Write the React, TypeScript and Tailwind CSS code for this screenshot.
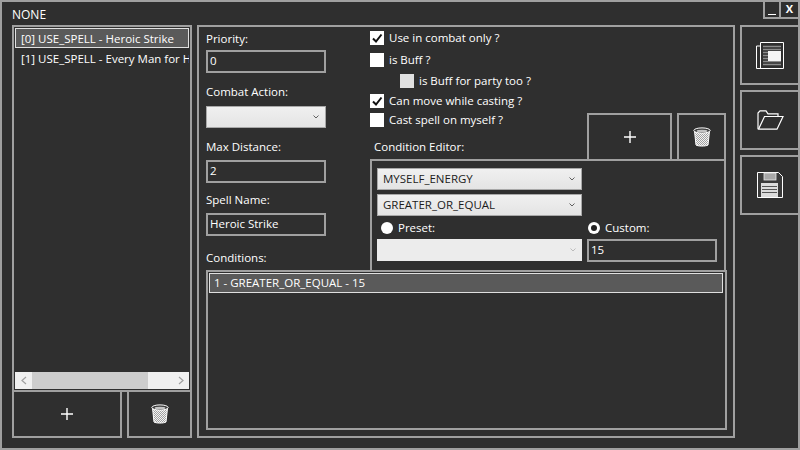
import { ReactNode } from "react";

const font = { fontFamily: '"Open Sans", "Liberation Sans", sans-serif' };

function Chevron({ color = "#606060" }: { color?: string }) {
  return (
    <svg width="6" height="4" viewBox="0 0 6 4" fill="none" stroke={color} strokeWidth="1">
      <path d="M0.5 0.5l2.5 2.5 2.5-2.5" />
    </svg>
  );
}

function Trash() {
  return (
    <svg width="18" height="20" viewBox="0 0 18 20">
      <defs>
        <pattern id="mesh" width="2" height="2" patternUnits="userSpaceOnUse">
          <rect width="2" height="2" fill="#f4f4f4" />
          <rect width="1" height="1" fill="#a0a0a0" />
          <rect x="1" y="1" width="1" height="1" fill="#a0a0a0" />
        </pattern>
      </defs>
      <path d="M1.5 4l1.5 14c2 1.4 10 1.4 12 0L16.5 4z" fill="url(#mesh)" stroke="#fff" strokeWidth="1" />
      <ellipse cx="9" cy="3.5" rx="8.2" ry="2.6" fill="#3c3c3c" stroke="#fff" strokeWidth="1" />
      <ellipse cx="9" cy="4" rx="5.5" ry="1.2" fill="#c4c4c4" />
    </svg>
  );
}

function Plus() {
  return (
    <svg width="12" height="12" viewBox="0 0 12 12" stroke="#fff" strokeWidth="1.4">
      <path d="M0 6h12M6 0v12" />
    </svg>
  );
}

function NewsIcon() {
  return (
    <svg width="28" height="27" viewBox="0 0 28 27" fill="none">
      <path d="M4.5 4H0.5v22.5H27.5V0.5H4.5V26" stroke="#fff" strokeWidth="1" />
      <path d="M7 4.5h18M7 7.5h18M7 10.5h5M7 13.5h5M7 16.5h5M7 19.5h18M7 22.5h18" stroke="#8c8c8c" strokeWidth="1.5" />
      <rect x="12" y="9" width="13" height="10" fill="#f4f4f4" />
    </svg>
  );
}

function FolderIcon() {
  return (
    <svg width="27" height="20" viewBox="0 0 27 20" fill="none" stroke="#fff" strokeWidth="1.2">
      <path d="M1 19V3L3 0.8h6l2 3h10v2.5" />
      <path d="M1.5 19.2h18.5L26 6.5H7.5L1.5 19.2z" />
    </svg>
  );
}

function SaveIcon() {
  return (
    <svg width="26" height="26" viewBox="0 0 26 26">
      <path d="M0.5 0.5h21l4 4v21H0.5z" fill="#3a3a3a" stroke="#fff" strokeWidth="1" />
      <rect x="7" y="1" width="12" height="7" fill="#a8a8a8" stroke="#e8e8e8" strokeWidth="0.8" />
      <rect x="4" y="11" width="17" height="14" fill="#dcdcdc" />
      <path d="M5 14.5h15M5 17.5h15M5 20.5h15" stroke="#555" strokeWidth="1" />
    </svg>
  );
}

function Btn({ className, children }: { className: string; children: ReactNode }) {
  return (
    <div className={`flex items-center justify-center border-2 border-[#a0a0a0] ${className}`}>
      {children}
    </div>
  );
}

function Field({ value, className }: { value: string; className: string }) {
  return (
    <div className={`h-[23px] border-2 border-[#a0a0a0] pl-[2px] text-[11.5px] leading-[18px] text-white ${className}`}>
      {value}
    </div>
  );
}

function Select({ value, className, disabled }: { value?: string; className: string; disabled?: boolean }) {
  return (
    <div
      className={`flex h-[22px] items-center justify-between pl-[5px] pr-[6px] text-[11.5px] text-[#1c1c1c] ${className} ${
        disabled ? "bg-[#ececec]" : "bg-gradient-to-b from-[#f0f0f0] to-[#e4e4e4] border border-[#a8a8a8]"
      }`}
    >
      <span>{value}</span>
      <Chevron color={disabled ? "#bbbbbb" : "#606060"} />
    </div>
  );
}

function Check({ label, checked, disabled, className = "" }: { label: string; checked?: boolean; disabled?: boolean; className?: string }) {
  return (
    <div className={`flex h-[20px] items-center gap-[5px] text-[11.5px] text-white ${className}`}>
      <div className={`flex h-[14px] w-[14px] items-center justify-center ${disabled ? "bg-[#e0e0e0]" : "bg-white"}`}>
        {checked && (
          <svg width="12" height="12" viewBox="0 0 12 12" fill="none" stroke="#111" strokeWidth="2">
            <path d="M2 6.5l3 3 5.5-7" />
          </svg>
        )}
      </div>
      {label}
    </div>
  );
}

function Radio({ label, checked, className = "" }: { label: string; checked?: boolean; className?: string }) {
  return (
    <div className={`flex items-center gap-[5px] text-[11.5px] text-white ${className}`}>
      <div className="flex h-[12px] w-[12px] items-center justify-center rounded-full bg-white">
        {checked && <div className="h-[6px] w-[6px] rounded-full bg-[#222]" />}
      </div>
      {label}
    </div>
  );
}

function Label({ children, className = "" }: { children: ReactNode; className?: string }) {
  return <div className={`text-[11.5px] leading-[16px] text-white ${className}`}>{children}</div>;
}

export default function App() {
  return (
    <div style={font} className="flex h-[450px] w-[800px] flex-col overflow-hidden border-2 border-[#a0a0a0] bg-[#2f2f2f]">
      <div className="flex h-[23px] shrink-0 items-start justify-between">
        <div className="pl-[10px] pt-[5px] text-[12px] leading-[16px] text-white">NONE</div>
        <div className="-mt-[2px] flex h-[19px]">
          <div className="flex w-[18px] items-end justify-center border-x-2 border-b-2 border-[#a0a0a0] pb-[2px]">
            <div className="h-[1px] w-[8px] bg-white" />
          </div>
          <div className="w-[17px] border-b-2 border-[#a0a0a0] text-center text-[11px] leading-[17px] font-bold text-white">X</div>
        </div>
      </div>
      <div className="flex flex-1 pl-[10px]">
        {/* rule list */}
        <div className="flex w-[180px] shrink-0 flex-col">
          <div className="flex h-[367px] flex-col border-2 border-[#a0a0a0] p-[1px]">
            <div className="flex-1 overflow-hidden text-[11.5px] text-white">
              <div className="h-[20px] overflow-hidden whitespace-nowrap border border-[#e0e0e0] bg-[#5a5a5a] pl-[5px] leading-[20px]">[0] USE_SPELL - Heroic Strike</div>
              <div className="h-[20px] overflow-hidden whitespace-nowrap pl-[6px] leading-[22px]">[1] USE_SPELL - Every Man for H</div>
            </div>
            <div className="flex h-[17px] items-center bg-[#f0f0f0]">
              <div className="flex w-[17px] justify-center">
                <svg width="6" height="9" viewBox="0 0 6 9" fill="none" stroke="#a0a0a0" strokeWidth="1.2"><path d="M5 1L1 4.5 5 8" /></svg>
              </div>
              <div className="h-full w-[116px] bg-[#cdcdcd]" />
              <div className="flex flex-1 justify-end pr-[5px]">
                <svg width="6" height="9" viewBox="0 0 6 9" fill="none" stroke="#a0a0a0" strokeWidth="1.2"><path d="M1 1l4 3.5L1 8" /></svg>
              </div>
            </div>
          </div>
          <div className="flex h-[46px] justify-between">
            <Btn className="w-[110px] border-t-0"><Plus /></Btn>
            <Btn className="w-[65px] border-t-0"><Trash /></Btn>
          </div>
        </div>

        {/* spell editor */}
        <div className="ml-[5px] flex h-[413px] w-[538px] shrink-0 flex-col border-2 border-[#a0a0a0] pl-[7px] pr-[6px]">
          <div className="flex h-[243px] shrink-0">
            <div className="w-[164px] shrink-0">
              <Label className="mt-[4px]">Priority:</Label>
              <Field value="0" className="mt-[3px] w-[120px]" />
              <Label className="mt-[11px]">Combat Action:</Label>
              <Select className="mt-[6px] w-[120px]" />
              <Label className="mt-[11px]">Max Distance:</Label>
              <Field value="2" className="mt-[5px] w-[120px]" />
              <Label className="mt-[9px]">Spell Name:</Label>
              <Field value="Heroic Strike" className="mt-[5px] w-[120px]" />
              <Label className="mt-[14px]">Conditions:</Label>
            </div>
            <div className="flex-1">
              <div className="flex items-end">
                <div className="w-[217px] shrink-0">
                  <Check label="Use in combat only ?" checked className="mt-[1px]" />
                  <Check label="is Buff ?" className="mt-[2px]" />
                  <Check label="is Buff for party too ?" disabled className="mt-[1px] ml-[30px]" />
                  <Check label="Can move while casting ?" checked />
                  <Check label="Cast spell on myself ?" className="-mt-[1px]" />
                  <Label className="mt-[9px] ml-[4px] pb-[4px]">Condition Editor:</Label>
                </div>
                <Btn className="h-[46px] w-[85px] border-b-0"><Plus /></Btn>
                <Btn className="ml-[5px] h-[46px] w-[49px] border-b-0"><Trash /></Btn>
              </div>
              <div className="flex h-[111px] w-[356px] flex-col border-x-2 border-t-2 border-[#a0a0a0] pl-[5px] pt-[7px]">
                <Select value="MYSELF_ENERGY" className="w-[205px]" />
                <Select value="GREATER_OR_EQUAL" className="mt-[4px] w-[205px]" />
                <div className="mt-[3px] flex h-[17px] items-center">
                  <Radio label="Preset:" className="ml-[4px] w-[207px]" />
                  <Radio label="Custom:" checked />
                </div>
                <div className="mt-[3px] flex">
                  <Select className="w-[205px]" disabled />
                  <Field value="15" className="ml-[5px] h-[22px] w-[130px]" />
                </div>
              </div>
            </div>
          </div>
          <div className="flex flex-1 flex-col border-2 border-[#a0a0a0] p-[1px]">
            <div className="mr-[1px] h-[20px] border border-[#e0e0e0] bg-[#5a5a5a] pl-[4px] text-[11.5px] leading-[18px] text-white">
              1 - GREATER_OR_EQUAL - 15
            </div>
          </div>
          <div className="h-[6px]" />
        </div>

        {/* file actions */}
        <div className="ml-[5px] flex flex-1 flex-col gap-[5px]">
          <Btn className="h-[60px] border-r-0"><NewsIcon /></Btn>
          <Btn className="h-[60px] border-r-0"><FolderIcon /></Btn>
          <Btn className="h-[60px] border-r-0"><SaveIcon /></Btn>
        </div>
      </div>
    </div>
  );
}
